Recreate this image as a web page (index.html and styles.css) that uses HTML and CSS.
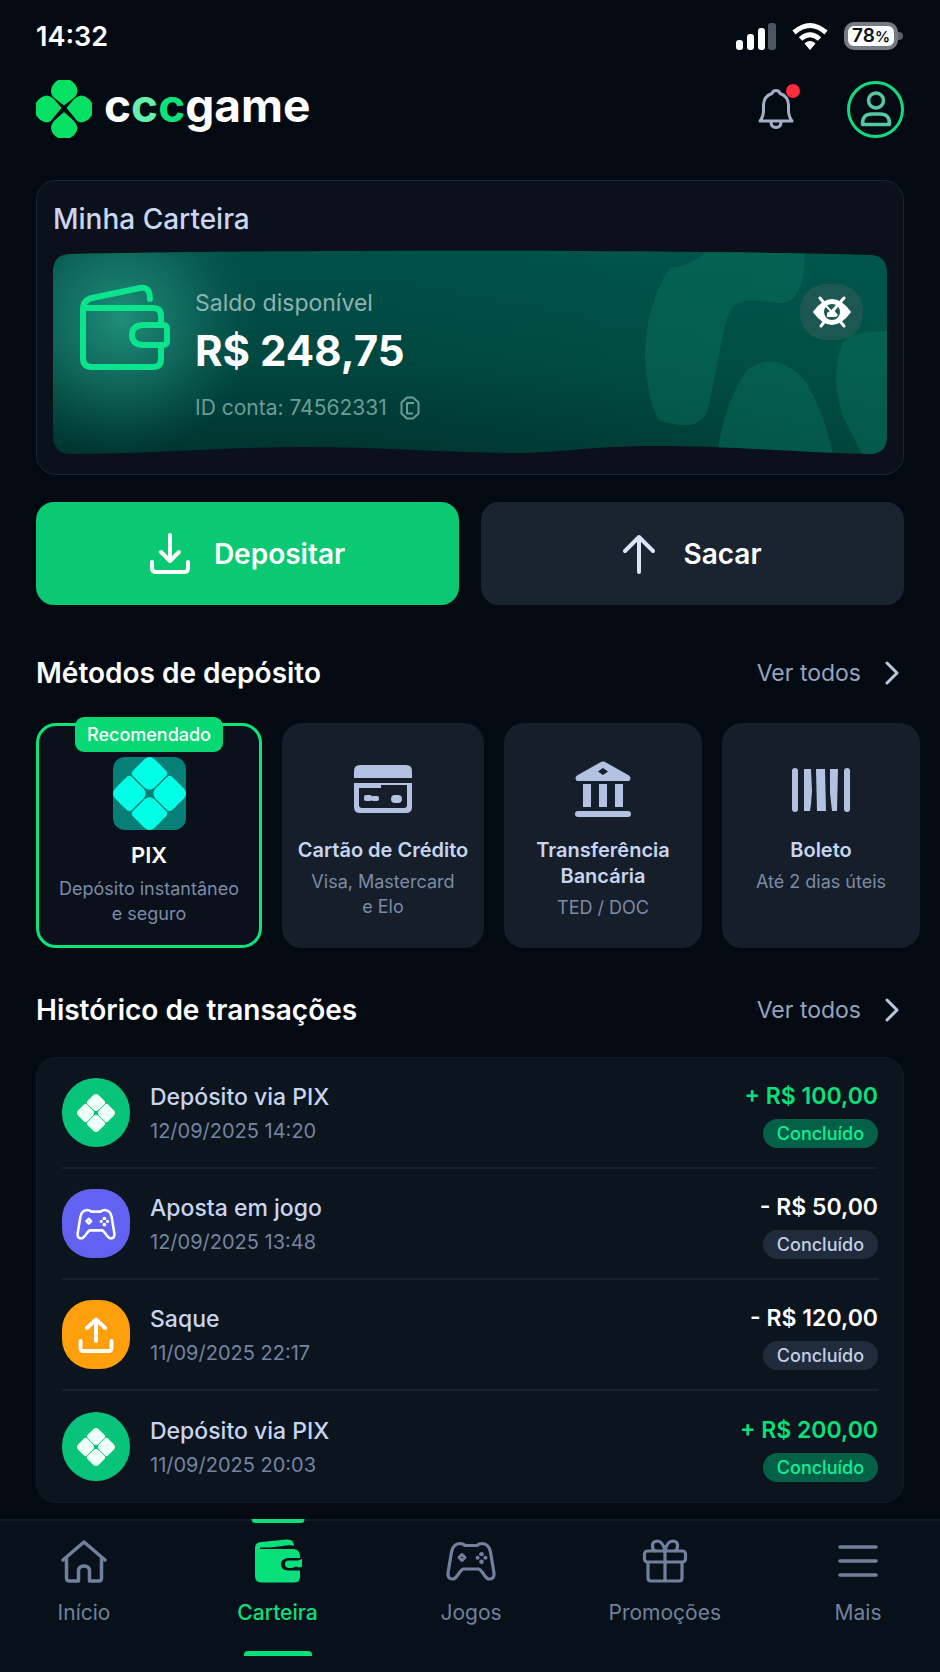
FILE: index.html
```
<!DOCTYPE html>
<html lang="pt-BR">
<head>
    <meta charset="UTF-8">
    <meta name="viewport" content="width=device-width, initial-scale=1.0">
    <title>cccgame - Minha Carteira</title>
    <link rel="stylesheet" href="styles.css">
</head>
<body>
    <!-- Ícones reutilizados -->
    <svg class="sprite" aria-hidden="true">
        <symbol id="pix" viewBox="1 1 38 38">
            <path d="M17.500 2Q20 0 22.500 2L28.500 8Q30 9.500 28.500 11L22.500 17Q20 19 17.500 17L11.500 11Q10 9.500 11.500 8Z"/>
            <path d="M17.500 23Q20 21 22.500 23L28.500 29Q30 30.500 28.500 32L22.500 38Q20 40 17.500 38L11.500 32Q10 30.500 11.500 29Z"/>
            <path d="M2 17.500L8 11.500Q9.500 10 11 11.500L17 17.500Q19 20 17 22.500L11 28.500Q9.500 30 8 28.500L2 22.500Q0 20 2 17.500Z"/>
            <path d="M23 17.500L29 11.500Q30.500 10 32 11.500L38 17.500Q40 20 38 22.500L32 28.500Q30.500 30 29 28.500L23 22.500Q21 20 23 17.500Z"/>
        </symbol>
        <symbol id="gamepad" viewBox="0 0 50 40">
            <path fill="none" stroke="currentColor" stroke-width="3.2" stroke-linejoin="round" d="M14 2.500Q17 2.500 19 4.500H31Q33 2.500 36 2.500Q43 3 44.500 11L48 32Q48.500 38 43.500 38Q41 38 38.500 34.500Q35.500 29.500 33 28H17Q14.500 29.500 11.500 34.500Q9 38 6.500 38Q1.500 38 2 32L5.500 11Q7 3 14 2.500Z"/>
            <path fill="none" stroke="currentColor" stroke-width="3" stroke-linejoin="round" d="M16 13.500L19 16.500L16 19.500L13 16.500Z"/>
            <path fill="currentColor" d="M35.500 11a2.500 2.500 0 0 1 2.500 2.500l-1 1.500h-3l-1-1.500a2.500 2.500 0 0 1 2.500-2.500zM35.500 23a2.300 2.300 0 0 0 2.300-2.300 2.300 2.300 0 0 0-4.600 0 2.300 2.300 0 0 0 2.300 2.300zM29.500 16.800a2.300 2.300 0 0 1 2.500-2l1.500 1v2l-1.500 1a2.300 2.300 0 0 1-2.500-2zM41.500 16.800a2.300 2.300 0 0 0-2.500-2l-1.500 1v2l1.500 1a2.300 2.300 0 0 0 2.500-2z"/>
        </symbol>
        <symbol id="chevron" viewBox="0 0 14 24">
            <path fill="none" stroke="currentColor" stroke-width="3" stroke-linecap="round" stroke-linejoin="round" d="M2 2L12 12L2 22"/>
        </symbol>
    </svg>

    <div class="app">
        <!-- Barra de status -->
        <div class="status-bar">
            <span class="clock">14:32</span>
            <div class="status-icons">
                <svg width="40" height="28" viewBox="0 0 40 28" aria-hidden="true">
                    <rect x="0" y="18" width="7" height="10" rx="3" fill="#fff"/>
                    <rect x="11" y="12" width="7" height="16" rx="3" fill="#fff"/>
                    <rect x="22" y="6" width="7" height="22" rx="3" fill="#fff"/>
                    <rect x="32" y="1" width="8" height="27" rx="3" fill="#4d5562"/>
                </svg>
                <svg width="36" height="28" viewBox="0 0 36 28" aria-hidden="true">
                    <path fill="none" stroke="#fff" stroke-width="5" d="M2 10.500Q18-3.500 34 10.500"/>
                    <path fill="none" stroke="#fff" stroke-width="5" d="M8.500 17Q18 8.500 27.500 17"/>
                    <path fill="#fff" d="M13 21.500Q18 17.500 23 21.500L18 27.500Z" stroke="#fff" stroke-linejoin="round"/>
                </svg>
                <div class="battery"><span>78<small>%</small></span></div>
            </div>
        </div>

        <!-- Topo -->
        <header class="topbar">
            <a class="brand" href="#">
                <svg width="56" height="58" viewBox="0 0 56 58" fill="#06e163" aria-hidden="true">
                    <path d="M22 0H34Q41 4 41.500 11Q41 16 37 18.500L28 25.500L19 18.500Q15 16 15 11Q15.500 4 22 0Z"/>
                    <path d="M22 58H34Q41 54 41.500 48Q41 44 37 40L28 32L19 40Q15 44 15 48Q15.500 54 22 58Z"/>
                    <path d="M0 23Q4 16 11 15.500Q15 16 18 19L25.500 28L18 37Q15 42 11 42.500Q4 42 0 35Z"/>
                    <path d="M56 23Q52 16 45 15.500Q41 16 38 19L30.500 28L38 37Q41 42 45 42.500Q52 42 56 35Z"/>
                </svg>
                <span class="brand-name">c<span class="mint">c</span><span class="green">c</span>game</span>
            </a>
            <div class="topbar-actions">
                <button class="bell" type="button" aria-label="Notificações">
                    <svg width="36" height="42" viewBox="0 0 36 42" fill="none" stroke="#a3afc8" stroke-width="3" stroke-linejoin="round" aria-hidden="true">
                        <path d="M2 33Q5.500 28.500 5.500 22V17Q6 8 14 5.500Q15 2.500 18 2.500Q21 2.500 22 5.500Q30 8 30.500 17V22Q30.500 28.500 34 33Z"/>
                        <path d="M13 34Q13 39.500 18 39.500Q23 39.500 23 34"/>
                    </svg>
                    <span class="dot"></span>
                </button>
                <button class="avatar" type="button" aria-label="Perfil">
                    <svg width="32" height="36" viewBox="0 0 32 36" fill="none" stroke="#55c9a3" stroke-width="3.500" stroke-linejoin="round" aria-hidden="true">
                        <circle cx="16" cy="9.500" r="7.500"/>
                        <path d="M2.500 33.500Q2 23 12 23H20Q30 23 29.500 33.500Z"/>
                    </svg>
                </button>
            </div>
        </header>

        <main>
            <!-- Carteira -->
            <section class="wallet">
                <h2>Minha Carteira</h2>
                <div class="balance">
                    <svg class="balance-bg" viewBox="0 0 834 204" preserveAspectRatio="none" aria-hidden="true">
                        <defs>
                            <linearGradient id="base" x1="0" y1="0" x2="0" y2="1">
                                <stop offset="0" stop-color="#00504a"/>
                                <stop offset=".55" stop-color="#004740"/>
                                <stop offset="1" stop-color="#003430"/>
                            </linearGradient>
                            <radialGradient id="glow" gradientUnits="userSpaceOnUse" cx="68" cy="68" r="140">
                                <stop offset="0" stop-color="#1f8f7a"/>
                                <stop offset=".5" stop-color="#167264" stop-opacity=".7"/>
                                <stop offset="1" stop-color="#0b5a50" stop-opacity="0"/>
                            </radialGradient>
                            <linearGradient id="side" x1="0" y1="0" x2="1" y2="0">
                                <stop offset=".4" stop-color="#00604f" stop-opacity="0"/>
                                <stop offset="1" stop-color="#00604f" stop-opacity=".4"/>
                            </linearGradient>
                            <clipPath id="wave">
                                <path d="M0 22Q0 4 18 4C200 0 600-1 816 5Q834 5 834 23V186Q834 204 816 204C740 202 680 196 602 196C540 196 500 203 465 203C400 203 330 197 250 197C170 197 100 204 18 204Q0 204 0 186Z"/>
                            </clipPath>
                        </defs>
                        <g clip-path="url(#wave)">
                            <rect width="834" height="204" fill="url(#base)"/>
                            <rect width="834" height="204" fill="url(#side)"/>
                            <rect width="834" height="204" fill="url(#glow)"/>
                            <g fill="#0b7a62" fill-opacity=".38">
                                <path d="M617 18Q592 55 592 107Q594 150 606 170Q620 176 636 175Q652 173 656 155L667 100Q673 62 682 55Q690 49 705 51L730 53Q752 50 752 0H655Q640 16 617 18Z"/>
                                <path d="M664 204Q672 150 694 120Q724 98 754 133Q772 165 780 204Z"/>
                                <path d="M840 81Q800 80 790 92Q776 125 790 167L810 206H840Z"/>
                            </g>
                        </g>
                    </svg>
                    <svg class="wallet-icon" width="92" height="88" viewBox="0 0 92 88" fill="none" stroke="#0be48c" stroke-width="6" stroke-linecap="round" stroke-linejoin="round" aria-hidden="true">
                        <path d="M82 61V75Q82 83 74 83H13Q4 83 4 74V26Q4 16 13 14L61 4Q71 2 71 15"/>
                        <path d="M5 24H74Q82 24 82 32V40"/>
                        <path d="M63 41H84Q88 41 88 45V57Q88 61 84 61H63Q53 60 53 51Q53 42 63 41Z"/>
                    </svg>
                    <div class="balance-info">
                        <p class="label">Saldo disponível</p>
                        <p class="amount">R$ 248,75</p>
                        <p class="account">
                            <span>ID conta: 74562331</span>
                            <button type="button" aria-label="Copiar ID">
                                <svg width="20" height="24" viewBox="0 0 20 24" fill="none" stroke="currentColor" stroke-width="2" stroke-linejoin="round" aria-hidden="true">
                                    <path d="M7 1.500H13L18.500 6.500V17.500L13 22.500H7L1.500 17.500V6.500Z"/>
                                    <path d="M14 7H7V17.500H13"/>
                                </svg>
                            </button>
                        </p>
                    </div>
                    <button class="toggle-eye" type="button" aria-label="Ocultar saldo">
                        <svg width="38" height="32" viewBox="0 0 38 32" fill="none" stroke="#fff" aria-hidden="true">
                            <path fill="#fff" stroke-width="2" stroke-linejoin="round" fill-rule="evenodd" d="M1 16Q10 4 19 4Q28 4 37 16Q28 28 19 28Q10 28 1 16ZM19 7A9 9 0 0 0 19 25A9 9 0 0 0 19 7Z"/>
                            <path stroke-width="3" stroke-linecap="round" d="M7 2L11 7M31 2L17 18M31 30L27 25M8 30L12 25"/>
                            <path stroke-width="2" stroke-linecap="round" d="M13 10L19 16"/>
                            <path fill="#fff" stroke="none" d="M20 13L25 19L23 21H14V17Z"/>
                        </svg>
                    </button>
                </div>
            </section>

            <div class="actions">
                <button class="btn btn-deposit" type="button">
                    <svg width="40" height="42" viewBox="0 0 40 42" fill="none" stroke="currentColor" stroke-width="4" stroke-linecap="round" stroke-linejoin="round" aria-hidden="true">
                        <path d="M20 2V26M11 19L20 28L29 19M2 29V35Q2 39 6 39H34Q38 39 38 35V29"/>
                    </svg>
                    Depositar
                </button>
                <button class="btn btn-withdraw" type="button">
                    <svg width="32" height="40" viewBox="0 0 32 40" fill="none" stroke="#dce5f7" stroke-width="4" stroke-linecap="round" stroke-linejoin="round" aria-hidden="true">
                        <path d="M16 38V3M2 17L16 3L30 17"/>
                    </svg>
                    Sacar
                </button>
            </div>

            <!-- Métodos de depósito -->
            <section class="section">
                <div class="section-head">
                    <h2>Métodos de depósito</h2>
                    <a href="#">Ver todos <svg width="14" height="24" aria-hidden="true"><use href="#chevron"/></svg></a>
                </div>
                <div class="methods">
                    <button class="method selected" type="button">
                        <span class="badge">Recomendado</span>
                        <span class="pix-tile"><svg width="73" height="73" aria-hidden="true"><use href="#pix"/></svg></span>
                        <strong>PIX</strong>
                        <span class="desc">Depósito instantâneo<br>e seguro</span>
                    </button>
                    <button class="method" type="button">
                        <svg width="58" height="56" viewBox="0 0 58 56" fill="#b3c1e2" aria-hidden="true">
                            <path d="M6 4H52Q58 4 58 10V17H0V10Q0 4 6 4Z"/>
                            <path d="M0 22H58V46Q58 52 52 52H6Q0 52 0 46ZM5 27V44Q5 47 8 47H50Q53 47 53 44V24H27V27Z" fill-rule="evenodd"/>
                            <rect x="10" y="34" width="8" height="6" rx="2"/>
                            <rect x="17" y="35" width="8" height="5" rx="2"/>
                            <rect x="37" y="34" width="11" height="8" rx="4"/>
                        </svg>
                        <strong>Cartão de Crédito</strong>
                        <span class="desc">Visa, Mastercard<br>e Elo</span>
                    </button>
                    <button class="method" type="button">
                        <svg width="56" height="56" viewBox="0 0 56 56" fill="#b3c1e2" aria-hidden="true">
                            <path fill-rule="evenodd" d="M25 1.500Q28-.5 31 1.500L54 14.500Q57 17 54 20H2Q-1 17 2 14.500ZM28 7L23 10.500L28 14L33 10.500Z"/>
                            <path d="M8 23H16V46H8ZM24 23H32V46H24ZM40 23H48V46H40Z"/>
                            <rect y="50" width="56" height="6" rx="3"/>
                        </svg>
                        <strong>Transferência<br>Bancária</strong>
                        <span class="desc">TED / DOC</span>
                    </button>
                    <button class="method" type="button">
                        <svg width="58" height="56" viewBox="0 0 58 56" fill="#b3c1e2" aria-hidden="true">
                            <rect x="0" y="7" width="6" height="44" rx="3"/>
                            <path d="M12 8H19L20 30L19 43L18 50H12ZM24 8H33L34 50H25ZM38 8H46L45 50H40L38 32Z"/>
                            <rect x="52" y="7" width="6" height="44" rx="3"/>
                        </svg>
                        <strong>Boleto</strong>
                        <span class="desc">Até 2 dias úteis</span>
                    </button>
                </div>
            </section>

            <!-- Histórico -->
            <section class="section history">
                <div class="section-head">
                    <h2>Histórico de transações</h2>
                    <a href="#">Ver todos <svg width="14" height="24" aria-hidden="true"><use href="#chevron"/></svg></a>
                </div>
                <ul class="transactions">
                    <li>
                        <span class="tx-icon pix"><svg width="38" height="38" aria-hidden="true"><use href="#pix"/></svg></span>
                        <div class="tx-info">
                            <p>Depósito via PIX</p>
                            <time datetime="2025-09-12T14:20">12/09/2025 14:20</time>
                        </div>
                        <div class="tx-value in">
                            <p>+ R$ 100,00</p>
                            <span class="pill">Concluído</span>
                        </div>
                    </li>
                    <li>
                        <span class="tx-icon game"><svg width="40" height="32" aria-hidden="true"><use href="#gamepad"/></svg></span>
                        <div class="tx-info">
                            <p>Aposta em jogo</p>
                            <time datetime="2025-09-12T13:48">12/09/2025 13:48</time>
                        </div>
                        <div class="tx-value">
                            <p>- R$ 50,00</p>
                            <span class="pill">Concluído</span>
                        </div>
                    </li>
                    <li>
                        <span class="tx-icon out">
                            <svg width="36" height="36" viewBox="0 0 36 36" fill="none" stroke="currentColor" stroke-width="4" stroke-linecap="round" stroke-linejoin="round" aria-hidden="true">
                                <path d="M18 24V3M9 11L18 2.500L27 11M2.500 24V31Q2.500 34 5.500 34H30.500Q33.500 34 33.500 31V24"/>
                            </svg>
                        </span>
                        <div class="tx-info">
                            <p>Saque</p>
                            <time datetime="2025-09-11T22:17">11/09/2025 22:17</time>
                        </div>
                        <div class="tx-value">
                            <p>- R$ 120,00</p>
                            <span class="pill">Concluído</span>
                        </div>
                    </li>
                    <li>
                        <span class="tx-icon pix"><svg width="38" height="38" aria-hidden="true"><use href="#pix"/></svg></span>
                        <div class="tx-info">
                            <p>Depósito via PIX</p>
                            <time datetime="2025-09-11T20:03">11/09/2025 20:03</time>
                        </div>
                        <div class="tx-value in">
                            <p>+ R$ 200,00</p>
                            <span class="pill">Concluído</span>
                        </div>
                    </li>
                </ul>
            </section>
        </main>
    </div>

    <!-- Menu inferior -->
    <nav class="bottom-nav">
        <a href="#">
            <svg width="48" height="44" viewBox="0 0 48 44" fill="none" stroke="currentColor" stroke-width="3.500" stroke-linecap="round" stroke-linejoin="round" aria-hidden="true">
                <path d="M3 21L24 3L45 21"/>
                <path d="M6.500 20V39Q6.500 42 9.500 42H18.500V32Q18.500 27 24 27Q29.500 27 29.500 32V42H39Q41.500 42 41.500 39V20"/>
            </svg>
            Início
        </a>
        <a class="active" href="#">
            <svg width="48" height="44" viewBox="0 0 48 44" fill="currentColor" aria-hidden="true">
                <path d="M1 37V9Q1 3.500 7 3L33 .5Q40 0 40 7L36 6Q26 7 16 8.500H6V10H40Q46 11 46 17V19H34Q27 20 27 25Q27 31 34 31.500H46V38Q46 43.500 40 43.500H7Q1 43 1 37Z"/>
                <path d="M34 21.500H44L48 20V28L45 28.500L42 27.500L38 29H34Q31 28 31 25Q31 22 34 21.500Z"/>
            </svg>
            Carteira
        </a>
        <a href="#">
            <svg width="50" height="40" aria-hidden="true"><use href="#gamepad"/></svg>
            Jogos
        </a>
        <a href="#">
            <svg width="46" height="44" viewBox="0 0 46 44" fill="none" stroke="currentColor" stroke-width="3.200" stroke-linejoin="round" aria-hidden="true">
                <rect x="2.500" y="12" width="41" height="11" rx="3"/>
                <path d="M6 23V39Q6 42 9 42H37Q40 42 40 39V23M23 12V42"/>
                <path d="M23 12Q21 2 15 2Q10 2.500 10.500 7.500Q11 12 14 12M23 12Q25 2 31 2Q36 2.500 35.500 7.500Q35 12 32 12"/>
            </svg>
            Promoções
        </a>
        <a href="#">
            <svg width="40" height="36" viewBox="0 0 40 36" fill="none" stroke="currentColor" stroke-width="3.500" stroke-linecap="round" aria-hidden="true">
                <path d="M2 4H38M2 18H38M2 32H38"/>
            </svg>
            Mais
        </a>
    </nav>
</body>
</html>
```

FILE: styles.css
```
* {
    box-sizing: border-box;
    margin: 0;
    padding: 0;
}

body {
    min-height: 100vh;
    display: flex;
    flex-direction: column;
    background-color: #030a12;
    color: #fff;
    font-family: Inter, "Liberation Sans", sans-serif;
}

button {
    border: none;
    background: none;
    color: inherit;
    font-family: inherit;
    cursor: pointer;
}

a {
    color: inherit;
    text-decoration: none;
}

svg {
    display: block;
    flex-shrink: 0;
}

.sprite {
    position: absolute;
    width: 0;
    height: 0;
}

.app {
    flex: 1;
    padding: 22px 36px 16px;
}

/* Barra de status */
.status-bar {
    display: flex;
    align-items: flex-start;
    justify-content: space-between;
    height: 28px;
}

.clock {
    font-size: 27px;
    line-height: 30px;
    font-weight: 600;
}

.status-icons {
    display: flex;
    align-items: center;
    gap: 16px;
    padding-right: 6px;
}

.battery {
    position: relative;
    width: 54px;
    height: 28px;
    border: 4px solid #757b85;
    border-radius: 10px;
    background-color: #fff;
    color: #0a0f16;
    font-size: 19px;
    line-height: 20px;
    font-weight: 600;
    text-align: center;
}

.battery::after {
    content: "";
    position: absolute;
    top: 6px;
    right: -9px;
    width: 5px;
    height: 8px;
    border-radius: 0 4px 4px 0;
    background-color: #5a606b;
}

.battery small {
    font-size: 15px;
}

/* Topo */
.topbar {
    display: flex;
    align-items: center;
    justify-content: space-between;
    margin-top: 30px;
}

.brand {
    display: flex;
    align-items: flex-start;
    gap: 12px;
}

.brand-name {
    font-size: 46px;
    line-height: 50px;
    font-weight: 700;
}

.mint {
    color: #63f0ab;
}

.green {
    color: #0be27c;
}

.topbar-actions {
    display: flex;
    align-items: center;
    gap: 53px;
}

.bell {
    position: relative;
}

.dot {
    position: absolute;
    top: -4px;
    right: -6px;
    width: 14px;
    height: 14px;
    border-radius: 50%;
    background-color: #fb2c3c;
}

.avatar {
    display: flex;
    align-items: center;
    justify-content: center;
    width: 57px;
    height: 57px;
    border: 3px solid #0fdc82;
    border-radius: 50%;
}

/* Carteira */
.wallet {
    margin-top: 42px;
    padding: 21px 16px 20px;
    border: 1px solid #1c2533;
    border-radius: 20px;
    background-color: #0a111b;
}

h2 {
    font-size: 28px;
    line-height: 36px;
    font-weight: 600;
}

.wallet h2 {
    line-height: 34px;
    font-weight: 500;
    color: #cbd6f2;
}

.balance {
    position: relative;
    display: flex;
    align-items: flex-start;
    min-height: 204px;
    margin-top: 14px;
    padding: 34px 24px 30px 26px;
}

.balance-bg {
    position: absolute;
    inset: 0;
    width: 100%;
    height: 100%;
}

.wallet-icon,
.balance-info,
.toggle-eye {
    position: relative;
}

.balance-info {
    flex: 1;
    margin-left: 24px;
    padding-top: 5px;
}

.label {
    font-size: 23px;
    line-height: 28px;
    color: #8fb3b3;
}

.amount {
    margin-top: 8px;
    font-size: 42px;
    line-height: 52px;
    font-weight: 700;
}

.account {
    display: flex;
    align-items: center;
    gap: 13px;
    margin-top: 17px;
    font-size: 21px;
    line-height: 28px;
    color: #6c9c98;
}

.toggle-eye {
    display: flex;
    align-items: center;
    justify-content: center;
    width: 63px;
    height: 56px;
    border-radius: 26px;
    background-color: #1c5850;
}

/* Botões */
.actions {
    display: grid;
    grid-template-columns: 1fr 1fr;
    gap: 22px;
    margin-top: 27px;
}

.btn {
    display: flex;
    align-items: center;
    justify-content: center;
    gap: 24px;
    height: 103px;
    border-radius: 18px;
    font-size: 28px;
    font-weight: 600;
}

.btn-deposit {
    background-color: #0bc873;
}

.btn-withdraw {
    gap: 28px;
    background-color: #1a2430;
}

/* Seções */
.section {
    margin-top: 50px;
}

.section-head {
    display: flex;
    align-items: center;
    justify-content: space-between;
}

.section-head a {
    display: flex;
    align-items: center;
    gap: 24px;
    padding-right: 5px;
    font-size: 23px;
    line-height: 28px;
    color: #94a3c0;
}

.section-head svg {
    color: #b9c6df;
}

.methods {
    display: grid;
    grid-template-columns: 113fr 101fr 99fr 99fr;
    gap: 20px;
    margin: 32px -16px 0 0;
}

.method {
    position: relative;
    display: flex;
    flex-direction: column;
    align-items: center;
    min-height: 225px;
    padding: 38px 4px 24px;
    border-radius: 20px;
    background-color: #151e29;
    color: #c8d5f2;
    text-align: center;
}

.method strong {
    margin-top: 20px;
    font-size: 20px;
    line-height: 26px;
    font-weight: 600;
}

.desc {
    margin-top: 6px;
    font-size: 18px;
    line-height: 25px;
    color: #7c8ba8;
}

.method.selected {
    padding: 31px 0 0;
    border: 3px solid #0be47b;
    background-color: #0a111b;
}

.selected strong {
    margin-top: 12px;
    font-size: 22px;
    color: #fff;
}

.selected .desc {
    margin-top: 8px;
}

.badge {
    position: absolute;
    top: -9px;
    left: 50%;
    transform: translateX(-50%);
    padding: 0 12px;
    border-radius: 9px;
    background-color: #08d873;
    color: #fff;
    font-size: 18px;
    line-height: 35px;
    font-weight: 500;
}

.pix-tile {
    border-radius: 12px;
    background-color: #077f76;
    color: #00ffe6;
    fill: currentColor;
}

/* Histórico */
.history {
    margin-top: 44px;
}

.transactions {
    margin-top: 29px;
    padding: 0 25px;
    border: 1px solid #111b26;
    border-radius: 20px;
    background-color: #0c141e;
    list-style: none;
}

.transactions li {
    display: flex;
    align-items: center;
    gap: 20px;
    min-height: 111px;
    border-bottom: 2px solid #17212d;
}

.transactions li:last-child {
    border-bottom: none;
}

.tx-icon {
    display: flex;
    align-items: center;
    justify-content: center;
    width: 68px;
    height: 69px;
    border-radius: 34px;
}

.tx-icon.pix {
    background-color: #08c47a;
    fill: #effff9;
}

.tx-icon.game {
    border-radius: 30px;
    background-color: #6262f0;
}

.tx-icon.out {
    border-radius: 30px;
    background-color: #ff9f0c;
}

.tx-info {
    flex: 1;
}

.tx-info p,
.tx-value p {
    font-size: 23px;
    line-height: 32px;
    font-weight: 500;
    color: #c8d5f2;
}

.tx-info time {
    display: block;
    margin-top: 4px;
    font-size: 20px;
    line-height: 28px;
    color: #7484a2;
}

.tx-value {
    display: flex;
    flex-direction: column;
    align-items: flex-end;
    gap: 7px;
    padding-top: 3px;
}

.tx-value p {
    font-weight: 600;
    color: #fff;
}

.tx-value.in p {
    color: #08e07c;
}

.pill {
    padding: 0 14px;
    border-radius: 15px;
    background-color: #202c3c;
    color: #c3cfe6;
    font-size: 18px;
    line-height: 29px;
    font-weight: 500;
}

.in .pill {
    background-color: #056048;
    color: #0ff094;
}

/* Menu inferior */
.bottom-nav {
    display: flex;
    justify-content: space-between;
    min-height: 153px;
    padding: 0 26px 0 28px;
    border-top: 2px solid #111a26;
    background-color: #08111a;
}

.bottom-nav a {
    position: relative;
    display: grid;
    grid-template-rows: 44px 28px;
    align-content: start;
    place-items: center;
    gap: 16px;
    width: 112px;
    padding-top: 18px;
    font-size: 21px;
    line-height: 28px;
    color: #71819d;
}

.bottom-nav .active {
    color: #08e07c;
    font-weight: 500;
}

.active::before,
.active::after {
    content: "";
    position: absolute;
    left: 50%;
    transform: translateX(-50%);
    background-color: #08e07c;
}

.active::before {
    top: -2px;
    width: 53px;
    height: 4px;
    border-radius: 0 0 4px 4px;
}

.active::after {
    bottom: 16px;
    width: 68px;
    height: 5px;
    border-radius: 4px 4px 0 0;
}
```
